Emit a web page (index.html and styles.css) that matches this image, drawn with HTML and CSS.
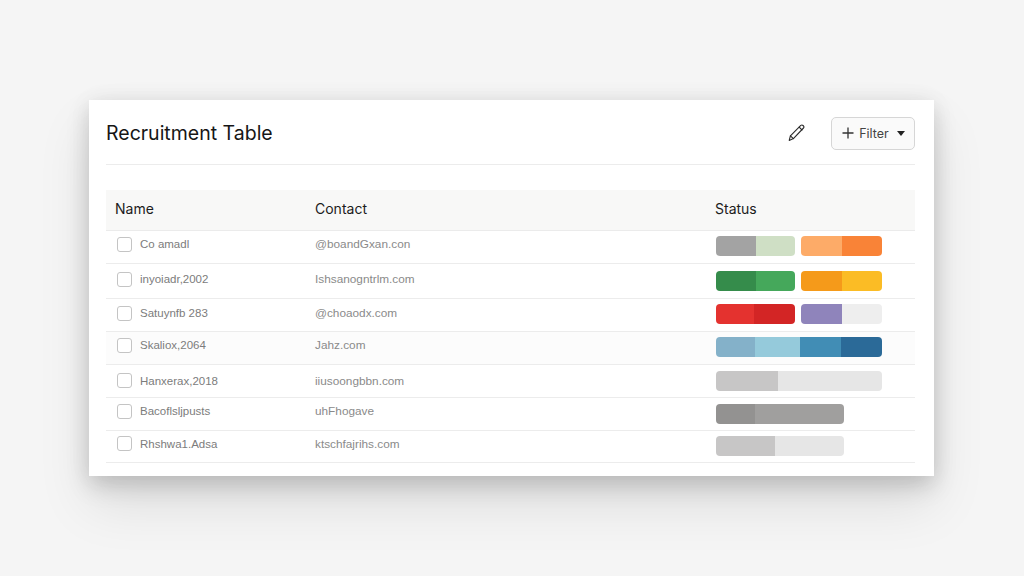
FILE: index.html
```html
<!DOCTYPE html>
<html lang="en">
<head>
	<meta charset="UTF-8" />
	<meta name="viewport" content="width=device-width, initial-scale=1.0" />
	<title>Recruitment Table</title>
	<link rel="stylesheet" href="styles.css">
</head>
<body>
	<div class="card">
		<header class="card-head">
			<h1>Recruitment Table</h1>
			<div class="tools">
				<svg class="pencil" width="20" height="20" viewBox="0 0 20 20" fill="none" stroke="#2a2a2a" stroke-width="1.1" stroke-linejoin="round" stroke-linecap="round">
					<path d="M14.8 2.4 C15.6 1.8 16.4 1.9 17 2.5 L17.5 3 C18.1 3.6 18.1 4.4 17.5 5 L7.4 15.6 L3.2 17.4 L4.4 12.8 Z"/>
					<path d="M13.2 4.2 L16 7"/>
					<path d="M4.4 12.8 L7.4 15.6"/>
				</svg>
				<button class="filter">
					<svg width="14" height="14" viewBox="0 0 14 14" stroke="#333" stroke-width="1.3"><path d="M7 1.5V12.5M1.5 7H12.5"/></svg>
					<span>Filter</span>
					<i class="caret"></i>
				</button>
			</div>
		</header>

		<table class="people">
			<thead>
				<tr><th class="col-name">Name</th><th class="col-contact">Contact</th><th>Status</th></tr>
			</thead>
			<tbody>
				<tr>
					<td><div class="who"><i class="check"></i>Co amadl</div></td>
					<td class="addr">@boandGxan.con</td>
					<td><div class="bars">
						<div class="bar" style="width:79px"><b class="s-gray" style="width:40px"></b><b class="s-sage" style="width:39px"></b></div>
						<div class="bar" style="width:81px"><b class="s-peach" style="width:41px"></b><b class="s-orange" style="width:40px"></b></div>
					</div></td>
				</tr>
				<tr class="tall">
					<td><div class="who"><i class="check"></i>inyoiadr,2002</div></td>
					<td class="addr">Ishsanogntrlm.com</td>
					<td><div class="bars">
						<div class="bar" style="width:79px"><b class="s-green-d" style="width:40px"></b><b class="s-green" style="width:39px"></b></div>
						<div class="bar" style="width:81px"><b class="s-amber-d" style="width:41px"></b><b class="s-amber" style="width:40px"></b></div>
					</div></td>
				</tr>
				<tr class="mid">
					<td><div class="who"><i class="check"></i>Satuynfb 283</div></td>
					<td class="addr">@choaodx.com</td>
					<td><div class="bars">
						<div class="bar" style="width:79px"><b class="s-red" style="width:38px"></b><b class="s-red-d" style="width:41px"></b></div>
						<div class="bar" style="width:81px"><b class="s-purple" style="width:41px"></b><b class="s-pale" style="width:40px"></b></div>
					</div></td>
				</tr>
				<tr class="tint">
					<td><div class="who"><i class="check"></i>Skaliox,2064</div></td>
					<td class="addr">Jahz.com</td>
					<td><div class="bars">
						<div class="bar" style="width:166px"><b class="s-blue-1" style="width:39px"></b><b class="s-blue-2" style="width:45px"></b><b class="s-blue-3" style="width:41px"></b><b class="s-blue-4" style="width:41px"></b></div>
					</div></td>
				</tr>
				<tr class="low">
					<td><div class="who"><i class="check"></i>Hanxerax,2018</div></td>
					<td class="addr">iiusoongbbn.com</td>
					<td><div class="bars">
						<div class="bar" style="width:166px"><b class="s-silver" style="width:62px"></b><b class="s-mist" style="width:104px"></b></div>
					</div></td>
				</tr>
				<tr class="drop">
					<td><div class="who"><i class="check"></i>Bacoflsljpusts</div></td>
					<td class="addr">uhFhogave</td>
					<td><div class="bars">
						<div class="bar" style="width:128px"><b class="s-slate-d" style="width:39px"></b><b class="s-slate" style="width:89px"></b></div>
					</div></td>
				</tr>
				<tr class="last">
					<td><div class="who"><i class="check"></i>Rhshwa1.Adsa</div></td>
					<td class="addr">ktschfajrihs.com</td>
					<td><div class="bars">
						<div class="bar" style="width:128px"><b class="s-silver" style="width:59px"></b><b class="s-mist" style="width:69px"></b></div>
					</div></td>
				</tr>
			</tbody>
		</table>
	</div>
</body>
</html>
```

FILE: styles.css
```css
html, body {
	height: 100%;
}
body {
	margin: 0;
	background-color: #f5f5f5;
	font-family: Inter, "Liberation Sans", sans-serif;
	padding: 100px 90px 0 89px;
	box-sizing: border-box;
	overflow: hidden;
}
.card {
	height: 376px;
	background-color: #fff;
	padding: 0 19px 0 17px;
	box-sizing: border-box;
	box-shadow: 0 10px 22px rgba(0,0,0,0.15), 0 28px 50px rgba(0,0,0,0.1), 0 0 22px rgba(0,0,0,0.05);
}
.card-head {
	height: 62px;
	display: flex;
	align-items: center;
	justify-content: space-between;
	border-bottom: 1px solid #ececec;
	margin-bottom: 25px;
	padding-top: 2px;
}
.card-head h1 {
	margin: 0;
	font-size: 19.5px;
	font-weight: 400;
	color: #161616;
}
.tools {
	display: flex;
	align-items: center;
	gap: 25px;
}
.filter {
	width: 84px;
	height: 33px;
	display: flex;
	align-items: center;
	justify-content: center;
	gap: 4px;
	padding: 0;
	background-color: #fafafa;
	border: 1px solid #d6d6d6;
	border-radius: 5px;
	font-family: inherit;
	font-size: 12.5px;
	color: #444;
}
.caret {
	width: 0;
	height: 0;
	margin-left: 4px;
	border-left: 4px solid transparent;
	border-right: 4px solid transparent;
	border-top: 5px solid #222;
}
.people {
	width: 100%;
	border-collapse: collapse;
	table-layout: fixed;
}
.people th {
	height: 40px;
	padding: 0 0 3px 9px;
	box-sizing: border-box;
	text-align: left;
	font-size: 14px;
	font-weight: 400;
	color: #1c1c1c;
	background-color: #f8f8f7;
	border-bottom: 1px solid #ebebeb;
}
.col-name {
	width: 200px;
}
.col-contact {
	width: 400px;
}
.people td {
	height: 33px;
	padding: 0 0 5px 9px;
	box-sizing: border-box;
	font-family: "Liberation Sans", sans-serif;
	font-size: 11.5px;
	color: #7c7c7c;
	border-bottom: 1px solid #ececec;
}
.people td.addr {
	font-size: 11.8px;
	color: #8a8a8a;
}
.people tr.tall td {
	height: 35px;
}
.people tr.tall td,
.people tr.mid td {
	padding-bottom: 3px;
}
.people tr.tint td {
	background-color: #fcfcfc;
}
.people tr.low td {
	padding-bottom: 0;
}
.people tr.last td {
	height: 32px;
}
/* status cells sit nearer the middle of the row than the text */
.people td:last-child,
.people tr.mid td:last-child {
	padding-bottom: 2px;
}
.people tr.tall td:last-child,
.people tr.low td:last-child,
.people tr.drop td:last-child,
.people tr.last td:last-child {
	padding-bottom: 0;
}
.who {
	display: flex;
	align-items: center;
	gap: 8px;
	padding-left: 2px;
}
.check {
	width: 13px;
	height: 13px;
	background-color: #fff;
	border: 1px solid #c4c4c4;
	border-radius: 3px;
	flex: none;
}
.bars {
	display: flex;
	gap: 6px;
	padding-left: 1px;
}
.bar {
	height: 20px;
	display: flex;
	border-radius: 4px;
	overflow: hidden;
}
.bar b {
	display: block;
	height: 100%;
}
.s-gray { background-color: #a3a3a3; }
.s-sage { background-color: #cfdfc5; }
.s-peach { background-color: #fdab68; }
.s-orange { background-color: #f98337; }
.s-green-d { background-color: #358c4b; }
.s-green { background-color: #45a85b; }
.s-amber-d { background-color: #f59a1a; }
.s-amber { background-color: #fbbc25; }
.s-red { background-color: #e4322f; }
.s-red-d { background-color: #d32525; }
.s-purple { background-color: #8f84bb; }
.s-pale { background-color: #eeeeee; }
.s-blue-1 { background-color: #84b1c9; }
.s-blue-2 { background-color: #95cadb; }
.s-blue-3 { background-color: #418db5; }
.s-blue-4 { background-color: #2b6a98; }
.s-silver { background-color: #c7c6c6; }
.s-mist { background-color: #e6e6e6; }
.s-slate-d { background-color: #939291; }
.s-slate { background-color: #a09f9e; }
```
